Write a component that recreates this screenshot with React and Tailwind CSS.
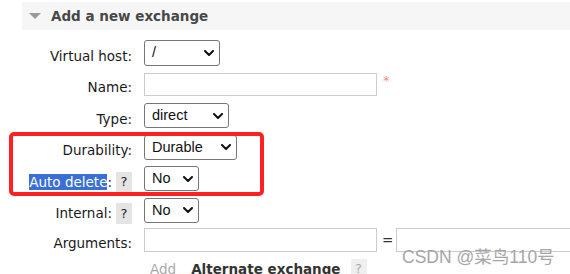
const Chevron = () => (
  <svg width="10" height="6" viewBox="0 0 10 6" className="shrink-0">
    <polyline points="1,1 5,5 9,1" fill="none" stroke="#111" strokeWidth="2" strokeLinecap="round" strokeLinejoin="round" />
  </svg>
);

const FakeSelect = ({ value, width, height = 'h-[25px]' }) => (
  <div
    className={`${width} ${height} flex items-center justify-between border border-[#767676] rounded-[3px] bg-white pl-[7px] pr-[5px] text-[14.5px] text-[#111] font-['Liberation_Sans',Arial,sans-serif]`}
  >
    <span className="leading-none">{value}</span>
    <Chevron />
  </div>
);

const Help = ({ light }) => (
  <span
    className={`inline-flex w-[16px] h-[21px] items-center justify-center text-[13px] ${
      light ? 'bg-[#efefef] text-[#aaa]' : 'bg-[#e4e4e4] text-[#222]'
    }`}
  >
    ?
  </span>
);

// labels sit a few px lower than the controls in the original page
const Row = ({ label, help, h = 'h-[31px]', children }) => (
  <div className={`flex items-center ${h}`}>
    <div className="w-[132px] shrink-0 flex items-center justify-end pt-[7px]">
      {label}
      {help && <span className="ml-[4px] flex"><Help /></span>}
    </div>
    <div className="ml-[12px] shrink-0 flex items-center">{children}</div>
  </div>
);

export default function App() {
  return (
    <div className="relative w-[570px] h-[274px] overflow-hidden bg-white text-[13.5px] text-[#1a1a1a] font-['DejaVu_Sans',Verdana,sans-serif]">
      {/* section header */}
      <div className="mt-[2px] ml-[22px] h-[28px] bg-[#f6f6f6] flex items-center">
        <svg width="12" height="7" viewBox="0 0 12 7" className="ml-[7px]">
          <polygon points="0,0 12,0 6,6" fill="#9a9a9a" />
        </svg>
        <span className="ml-[10px] font-bold text-[13.5px] text-[#484848]">Add a new exchange</span>
      </div>

      <div className="mt-[7px] flex flex-col">
        <Row label="Virtual host:">
          <FakeSelect value="/" width="w-[76px]" height="h-[26px]" />
        </Row>
        <Row label="Name:" h="h-[32px]">
          <div className="w-[233px] h-[23px] border border-[#cccccc]" />
          <span className="ml-[6px] -mt-[6px] text-[13px] text-[#ff8a8a]">*</span>
        </Row>
        <Row label="Type:">
          <FakeSelect value="direct" width="w-[85px]" />
        </Row>
        <Row label="Durability:" h="h-[32px]">
          <FakeSelect value="Durable" width="w-[93px]" />
        </Row>
        <Row
          label={
            <span>
              <span className="bg-[#3a6fd6] text-white">Auto delete</span>:
            </span>
          }
          help
        >
          <FakeSelect value="No" width="w-[55px]" />
        </Row>
        <Row label="Internal:" help h="h-[32px]">
          <FakeSelect value="No" width="w-[55px]" />
        </Row>
        <Row label="Arguments:" h="h-[28px]">
          <div className="w-[233px] h-[24px] shrink-0 border border-[#cccccc]" />
          <span className="ml-[5px] mr-[3px] text-[#333]">=</span>
          <div className="w-[200px] h-[24px] shrink-0 border border-[#cccccc]" />
        </Row>
        <div className="flex items-center h-[28px] pl-[150px] pt-[2px]">
          <span className="text-[#aaaaaa]">Add</span>
          <span className="ml-[15px] font-bold text-[#333]">Alternate exchange</span>
          <span className="ml-[10px] flex"><Help light /></span>
        </div>
      </div>

      {/* red annotation box */}
      <div className="absolute left-[9px] top-[132px] w-[255px] h-[64px] border-[4px] border-[#ff2020] rounded-[5px]" />

      {/* watermark */}
      <div className="absolute left-[402px] top-[249px] text-[17.5px] text-[#a6a6a6] font-['Liberation_Sans','Noto_Sans_CJK_SC',sans-serif] leading-none">
        CSDN @菜鸟110号
      </div>
    </div>
  );
}
